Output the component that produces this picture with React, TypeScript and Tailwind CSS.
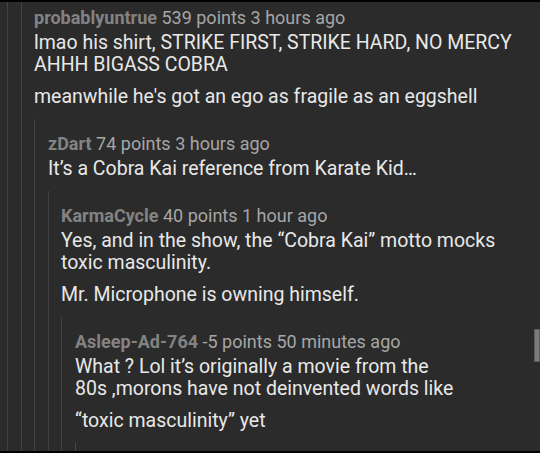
import React from 'react';

type Comment = {
    author: string;
    points: string;
    age: string;
    paragraphs: React.ReactNode[];
};

const comments: Comment[] = [
    {
        author: "probablyuntrue",
        points: "539 points",
        age: "3 hours ago",
        paragraphs: [
            "lmao his shirt, STRIKE FIRST, STRIKE HARD, NO MERCY AHHH BIGASS COBRA",
            "meanwhile he's got an ego as fragile as an eggshell",
        ],
    },
    {
        author: "zDart",
        points: "74 points",
        age: "3 hours ago",
        paragraphs: ["It’s a Cobra Kai reference from Karate Kid…"],
    },
    {
        author: "KarmaCycle",
        points: "40 points",
        age: "1 hour ago",
        paragraphs: [
            "Yes, and in the show, the “Cobra Kai” motto mocks toxic masculinity.",
            "Mr. Microphone is owning himself.",
        ],
    },
    {
        author: "Asleep-Ad-764",
        points: "-5 points",
        age: "50 minutes ago",
        paragraphs: [
            <>What ? Lol it’s originally a movie from the<br />80s ,morons have not deinvented words like</>,
            "“toxic masculinity” yet",
        ],
    },
];

const CommentBody: React.FC<{ comment: Comment }> = ({ comment }) => (
    <>
        <div className="h-[20px] leading-[20px] text-[18px] whitespace-nowrap">
            <span className="font-bold text-[#838383]">{comment.author}</span>
            <span className="text-[#a6a6a6]"> {comment.points} {comment.age}</span>
        </div>
        <div className="mt-[4px] flex flex-col gap-[10px] text-[19.5px] leading-[22px] text-[#e8e8e8]">
            {comment.paragraphs.map((p, i) => (
                <p key={i}>{p}</p>
            ))}
        </div>
    </>
);

// each reply sits inside its parent, so the thread lines run down to the bottom
const Thread: React.FC<{ depth: number }> = ({ depth }) => {
    const comment = comments[depth];
    if (!comment) {
        return <div className="mt-[11px] h-[40px] border-l border-[#474747]" />;
    }
    return (
        <div className={`mt-[11px] border-l border-[#414141] pt-[15px] ${depth % 2 ? "pl-[13px]" : "pl-[12px]"}`}>
            <CommentBody comment={comment} />
            <Thread depth={depth + 1} />
        </div>
    );
};

export default function App() {
    return (
        <div className="relative w-[540px] h-[453px] overflow-hidden bg-black py-[2px] font-['Roboto','Noto_Sans',sans-serif]">
            <div className="h-full overflow-hidden bg-[#2b2b2b] pl-[7px]">
                <div className="min-h-full border-l border-[#414141] pl-[13px]">
                    <div className="min-h-full border-l border-[#414141] pl-[12px] pt-[6px] pr-[12px]">
                        <CommentBody comment={comments[0]} />
                        <Thread depth={1} />
                    </div>
                </div>
            </div>
            <div className="absolute right-0 top-[329px] h-[33px] w-[6px] border border-[#5c5c5c] bg-[#7b7b7b]" />
        </div>
    );
}
